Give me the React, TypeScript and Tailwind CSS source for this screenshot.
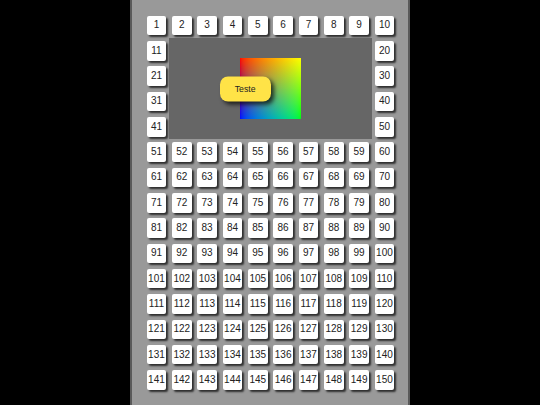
const font = { fontFamily: '"Liberation Sans", Arial, sans-serif' }

function Cell({ n }: { n: number }) {
  return (
    <div className="flex items-center justify-center">
      <div className="flex h-[19.5px] w-[19.5px] items-center justify-center rounded-[2px] bg-white text-[10px] leading-none text-[#222] shadow-[2px_2px_2px_rgba(0,0,0,0.7)]">
        {n}
      </div>
    </div>
  )
}

function Panel() {
  return (
    <div className="relative col-span-8 row-span-4 flex items-center justify-center bg-[#666]">
      <div className="relative h-[61px] w-[61px] bg-linear-to-r from-[#0000ff] to-[#00ff00]">
        <div className="absolute inset-0 bg-linear-to-r from-[#ff0000] to-[#ffff00] [mask-image:linear-gradient(to_bottom,black,transparent)]" />
      </div>
      <button className="absolute left-[50.5px] top-1/2 flex h-[25px] w-[51px] -translate-y-1/2 items-center justify-center rounded-[8px] bg-[#ffe347] text-[8.7px] text-[#222] shadow-[3px_3px_4px_rgba(0,0,0,0.7)]">
        Teste
      </button>
    </div>
  )
}

export default function App() {
  const items: React.ReactNode[] = []
  for (let n = 1; n <= 150; n++) {
    const row = Math.ceil(n / 10)
    const col = ((n - 1) % 10) + 1
    if (row >= 2 && row <= 5 && col > 1 && col < 10) {
      if (n === 12) items.push(<Panel key="panel" />)
      continue
    }
    items.push(<Cell key={n} n={n} />)
  }

  return (
    <div className="flex h-[405px] justify-center overflow-hidden bg-black" style={font}>
      <div className="h-[405px] w-[280px] border-x-2 border-[#5a5a5a] bg-[#999] pl-[11.8px] pt-[12.8px]">
        <div className="grid w-[253.33px] grid-cols-10 auto-rows-[25.33px]">{items}</div>
      </div>
    </div>
  )
}
